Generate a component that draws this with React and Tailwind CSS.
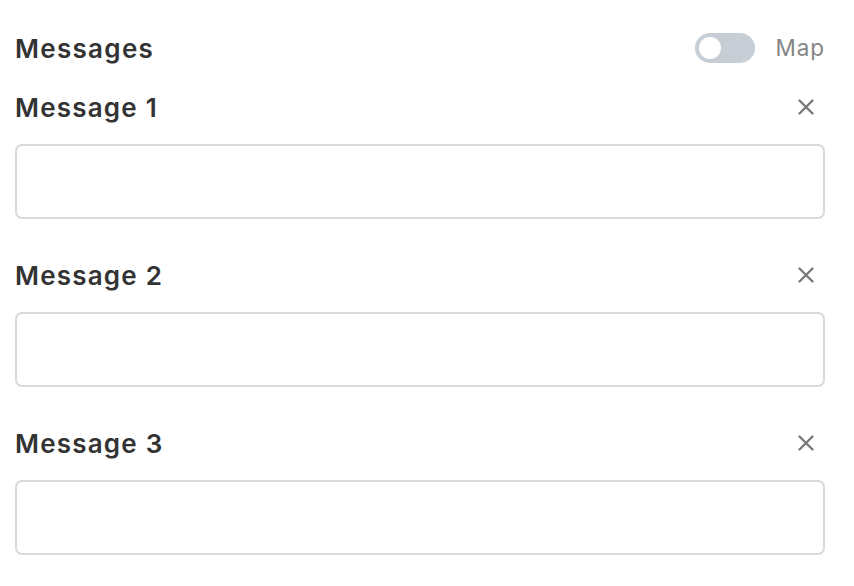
import React, { useState } from 'react';

const CloseIcon = () => (
  <svg width="18" height="18" viewBox="0 0 18 18" fill="none">
    <path d="M2.5 2.5L15.5 15.5M15.5 2.5L2.5 15.5" stroke="#787878" strokeWidth="2.4" strokeLinecap="round" />
  </svg>
);

const App = () => {
  const [messages, setMessages] = useState(["", "", ""]);
  const [map, setMap] = useState(false);

  return (
    <div className="bg-white min-h-[586px] pl-[15px] pr-[29px] pt-[30px] text-[#333]" style={{ fontFamily: 'Inter, "Noto Sans", sans-serif' }}>
      <div className="flex items-center justify-between h-[36px]">
        <h1 className="text-[26px] font-semibold tracking-[1.3px]">Messages</h1>
        <div className="flex items-center gap-[21px]">
          <button
            onClick={() => setMap(!map)}
            className="w-[60px] h-[30px] rounded-full bg-[#c7ced5] p-[4px] flex items-center"
          >
            <span className="w-[22px] h-[22px] rounded-full bg-white block"></span>
          </button>
          <span className="text-[22.5px] tracking-[0.9px] text-[#858585]">Map</span>
        </div>
      </div>

      {messages.map((m, i) => (
        <div key={i} className={i === 0 ? "mt-[23px]" : "mt-[38px]"}>
          <div className="flex items-center justify-between h-[36px]">
            <h2 className="text-[26px] font-semibold tracking-[1.2px]">Message {i + 1}</h2>
            <button className="mr-[10px]"><CloseIcon /></button>
          </div>
          <input
            type="text"
            value={m}
            onChange={(e) => {
              const next = [...messages];
              next[i] = e.target.value;
              setMessages(next);
            }}
            className="mt-[19px] block w-full h-[75px] border-2 border-[#dadada] rounded-[7px] px-3 outline-none"
          />
        </div>
      ))}
    </div>
  );
};

export default App;
